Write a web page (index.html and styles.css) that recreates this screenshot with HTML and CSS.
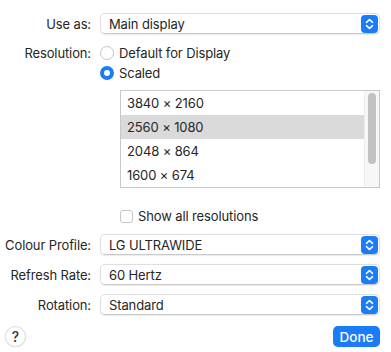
FILE: index.html
```html
<!DOCTYPE html>
<html lang="en">
<head>
    <meta charset="UTF-8">
    <meta name="viewport" content="width=device-width, initial-scale=1.0">
    <title>Display Settings</title>
    <link rel="stylesheet" href="styles.css">
</head>
<body>
    <div class="panel">
        <div class="row">
            <label class="label">Use as:</label>
            <div class="select">
                <span>Main display</span>
                <svg class="stepper" width="17" height="18" viewBox="0 0 17 18"><rect width="17" height="18" rx="4" fill="#1a7cf6"/><path d="M5.5 7.3 L8.5 4.5 L11.5 7.3 M5.5 10.7 L8.5 13.5 L11.5 10.7" fill="none" stroke="#fff" stroke-width="1.6" stroke-linecap="round" stroke-linejoin="round"/></svg>
            </div>
        </div>

        <div class="row row-resolution">
            <label class="label label-top">Resolution:</label>
            <div class="radios">
                <div class="radio-line"><span class="radio"></span>Default for Display</div>
                <div class="radio-line"><span class="radio checked"></span>Scaled</div>
            </div>
        </div>

        <div class="list">
            <div class="list-rows">
                <div class="list-item">3840 × 2160</div>
                <div class="list-item selected">2560 × 1080</div>
                <div class="list-item">2048 × 864</div>
                <div class="list-item">1600 × 674</div>
            </div>
            <div class="scrollbar"><div class="thumb"></div></div>
        </div>

        <div class="check-line"><span class="checkbox"></span>Show all resolutions</div>

        <div class="row row-profile">
            <label class="label">Colour Profile:</label>
            <div class="select">
                <span>LG ULTRAWIDE</span>
                <svg class="stepper" width="17" height="18" viewBox="0 0 17 18"><rect width="17" height="18" rx="4" fill="#1a7cf6"/><path d="M5.5 7.3 L8.5 4.5 L11.5 7.3 M5.5 10.7 L8.5 13.5 L11.5 10.7" fill="none" stroke="#fff" stroke-width="1.6" stroke-linecap="round" stroke-linejoin="round"/></svg>
            </div>
        </div>
        <div class="row row-next">
            <label class="label">Refresh Rate:</label>
            <div class="select">
                <span>60 Hertz</span>
                <svg class="stepper" width="17" height="18" viewBox="0 0 17 18"><rect width="17" height="18" rx="4" fill="#1a7cf6"/><path d="M5.5 7.3 L8.5 4.5 L11.5 7.3 M5.5 10.7 L8.5 13.5 L11.5 10.7" fill="none" stroke="#fff" stroke-width="1.6" stroke-linecap="round" stroke-linejoin="round"/></svg>
            </div>
        </div>
        <div class="row row-next">
            <label class="label">Rotation:</label>
            <div class="select">
                <span>Standard</span>
                <svg class="stepper" width="17" height="18" viewBox="0 0 17 18"><rect width="17" height="18" rx="4" fill="#1a7cf6"/><path d="M5.5 7.3 L8.5 4.5 L11.5 7.3 M5.5 10.7 L8.5 13.5 L11.5 10.7" fill="none" stroke="#fff" stroke-width="1.6" stroke-linecap="round" stroke-linejoin="round"/></svg>
            </div>
        </div>

        <div class="footer">
            <button class="help">?</button>
            <button class="done">Done</button>
        </div>
    </div>
</body>
</html>
```

FILE: styles.css
```css
body {
    margin: 0;
    background-color: #ffffff;
    font-family: Inter, "Liberation Sans", sans-serif;
    font-size: 13px;
    letter-spacing: -0.12px;
    color: #262626;
}
.panel {
    width: 391px;
    padding: 13px 11px 0 0;
    box-sizing: border-box;
}
.row {
    display: grid;
    grid-template-columns: 91px 1fr;
    column-gap: 9px;
    align-items: center;
}
.label {
    text-align: right;
}
.label-top {
    align-self: start;
    line-height: 20px;
}
.select {
    height: 21px;
    box-sizing: border-box;
    border: 1px solid #dedede;
    border-bottom-color: #c9c9c9;
    border-radius: 5px;
    box-shadow: 0 0.5px 1px rgba(0,0,0,0.08);
    display: flex;
    align-items: center;
    justify-content: space-between;
    padding: 0 1px 0 8px;
}
.stepper {
    display: block;
}
.row-resolution {
    margin-top: 9px;
}
.radios {
    display: flex;
    flex-direction: column;
}
.radio-line {
    height: 20px;
    display: flex;
    align-items: center;
    gap: 5px;
}
.radio {
    width: 14px;
    height: 14px;
    box-sizing: border-box;
    border-radius: 50%;
    border: 1px solid #c6c6c6;
    background-color: #fff;
}
.radio.checked {
    border: 4.5px solid #1a7cf6;
    background-color: #fff;
}
.list {
    margin: 7px 0 0 120px;
    height: 98px;
    box-sizing: border-box;
    border: 1px solid #c8c8c8;
    display: flex;
}
.list-rows {
    flex: 1;
}
.list-item {
    height: 24px;
    line-height: 24px;
    padding-left: 6px;
}
.list-item.selected {
    background-color: #dadada;
}
.scrollbar {
    width: 14px;
    background-color: #f7f7f7;
    border-left: 1px solid #ececec;
    padding-top: 2px;
}
.thumb {
    width: 8px;
    height: 71px;
    margin-left: 3px;
    border-radius: 4px;
    background-color: #c2c2c2;
}
.check-line {
    margin: 18px 0 0 120px;
    height: 20px;
    display: flex;
    align-items: center;
    gap: 5px;
}
.checkbox {
    width: 13px;
    height: 13px;
    box-sizing: border-box;
    border: 1px solid #c6c6c6;
    border-radius: 3px;
    background-color: #fff;
}
.row-profile {
    margin-top: 8px;
}
.row-next {
    margin-top: 9px;
}
.footer {
    margin-top: 11px;
    padding-left: 5px;
    display: flex;
    justify-content: space-between;
    align-items: center;
}
.help {
    width: 21px;
    height: 21px;
    border-radius: 50%;
    border: 1px solid #dcdcdc;
    background-color: #fff;
    box-shadow: 0 0.5px 1px rgba(0,0,0,0.12);
    font-family: inherit;
    font-size: 14px;
    font-weight: 500;
    color: #333;
    padding: 0;
}
.done {
    width: 47px;
    height: 21px;
    border: none;
    border-radius: 5px;
    background-color: #1a7cf6;
    color: #fff;
    font-family: inherit;
    font-size: 13.5px;
    font-weight: 500;
    padding: 0;
}
```
